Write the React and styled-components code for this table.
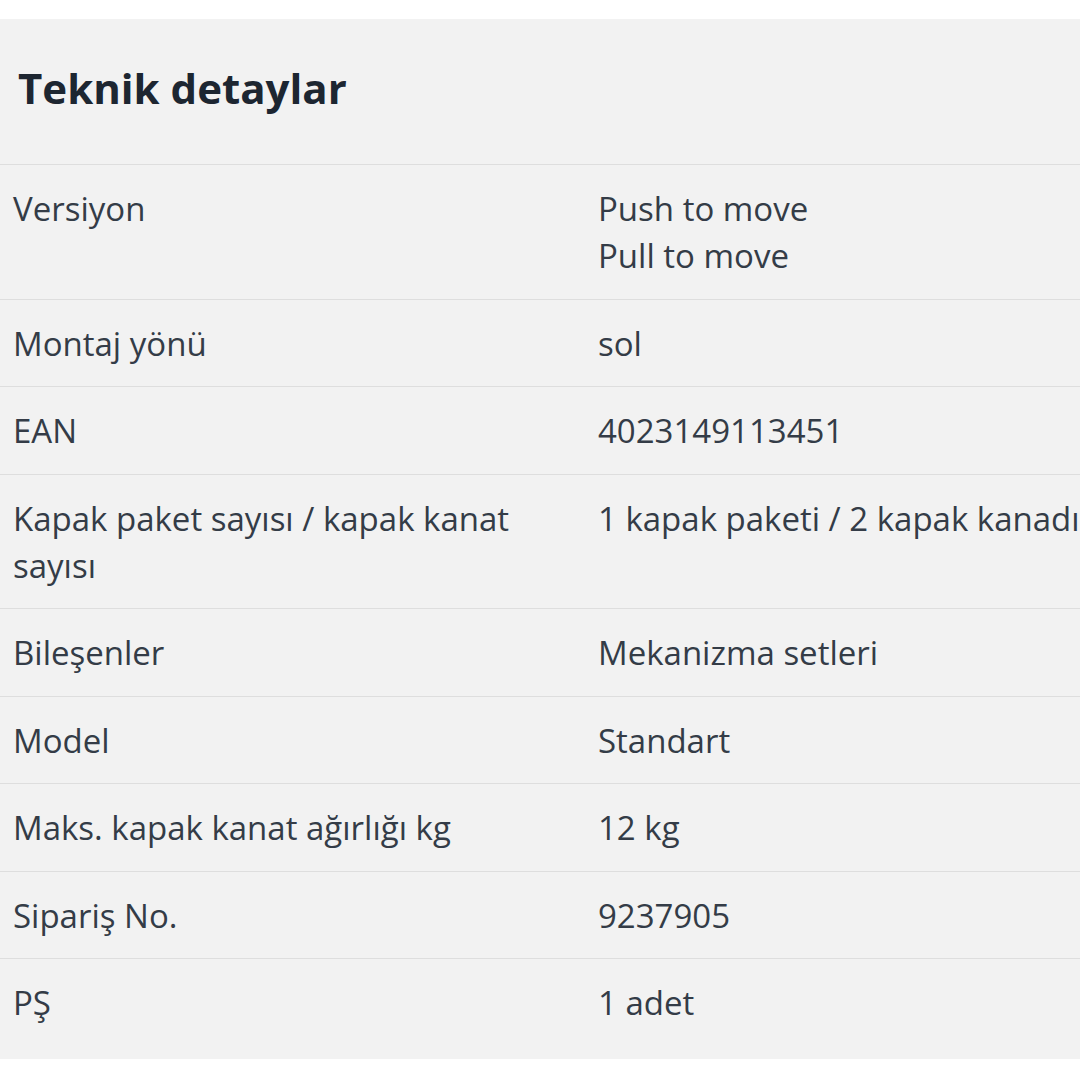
import React from "react";
import styled, { createGlobalStyle } from "styled-components";

const GlobalStyle = createGlobalStyle`
  html, body {
    margin: 0;
    padding: 0;
    background: #ffffff;
    overflow: hidden;
  }
  body {
    font-family: "Open Sans", "Noto Sans", sans-serif;
  }
`;

const Panel = styled.section`
  margin-top: 19px;
  width: 1400px;
  height: 1040px;
  background: #f2f2f2;
  color: #343c47;
`;

const Heading = styled.h2`
  margin: 0;
  height: 145px;
  box-sizing: border-box;
  padding: 0 0 8px 18px;
  display: flex;
  align-items: center;
  font-size: 42px;
  font-weight: 700;
  color: #1d2631;
`;

const Row = styled.div`
  display: grid;
  grid-template-columns: 585px 1fr;
  border-top: 1px solid #dedede;
`;

const Cell = styled.div`
  padding: 20px 13px 19.5px;
  font-size: 33px;
  line-height: 47px;
`;

const rows = [
  ["Versiyon", ["Push to move", "Pull to move"]],
  ["Montaj yönü", ["sol"]],
  ["EAN", ["4023149113451"]],
  ["Kapak paket sayısı / kapak kanat sayısı", ["1 kapak paketi / 2 kapak kanadı"]],
  ["Bileşenler", ["Mekanizma setleri"]],
  ["Model", ["Standart"]],
  ["Maks. kapak kanat ağırlığı kg", ["12 kg"]],
  ["Sipariş No.", ["9237905"]],
  ["PŞ", ["1 adet"]],
];

export default function App() {
  return (
    <>
      <GlobalStyle />
      <Panel>
        <Heading>Teknik detaylar</Heading>
        {rows.map(([label, values]) => (
          <Row key={label}>
            <Cell>{label}</Cell>
            <Cell>
              {values.map((v) => (
                <div key={v}>{v}</div>
              ))}
            </Cell>
          </Row>
        ))}
      </Panel>
    </>
  );
}
